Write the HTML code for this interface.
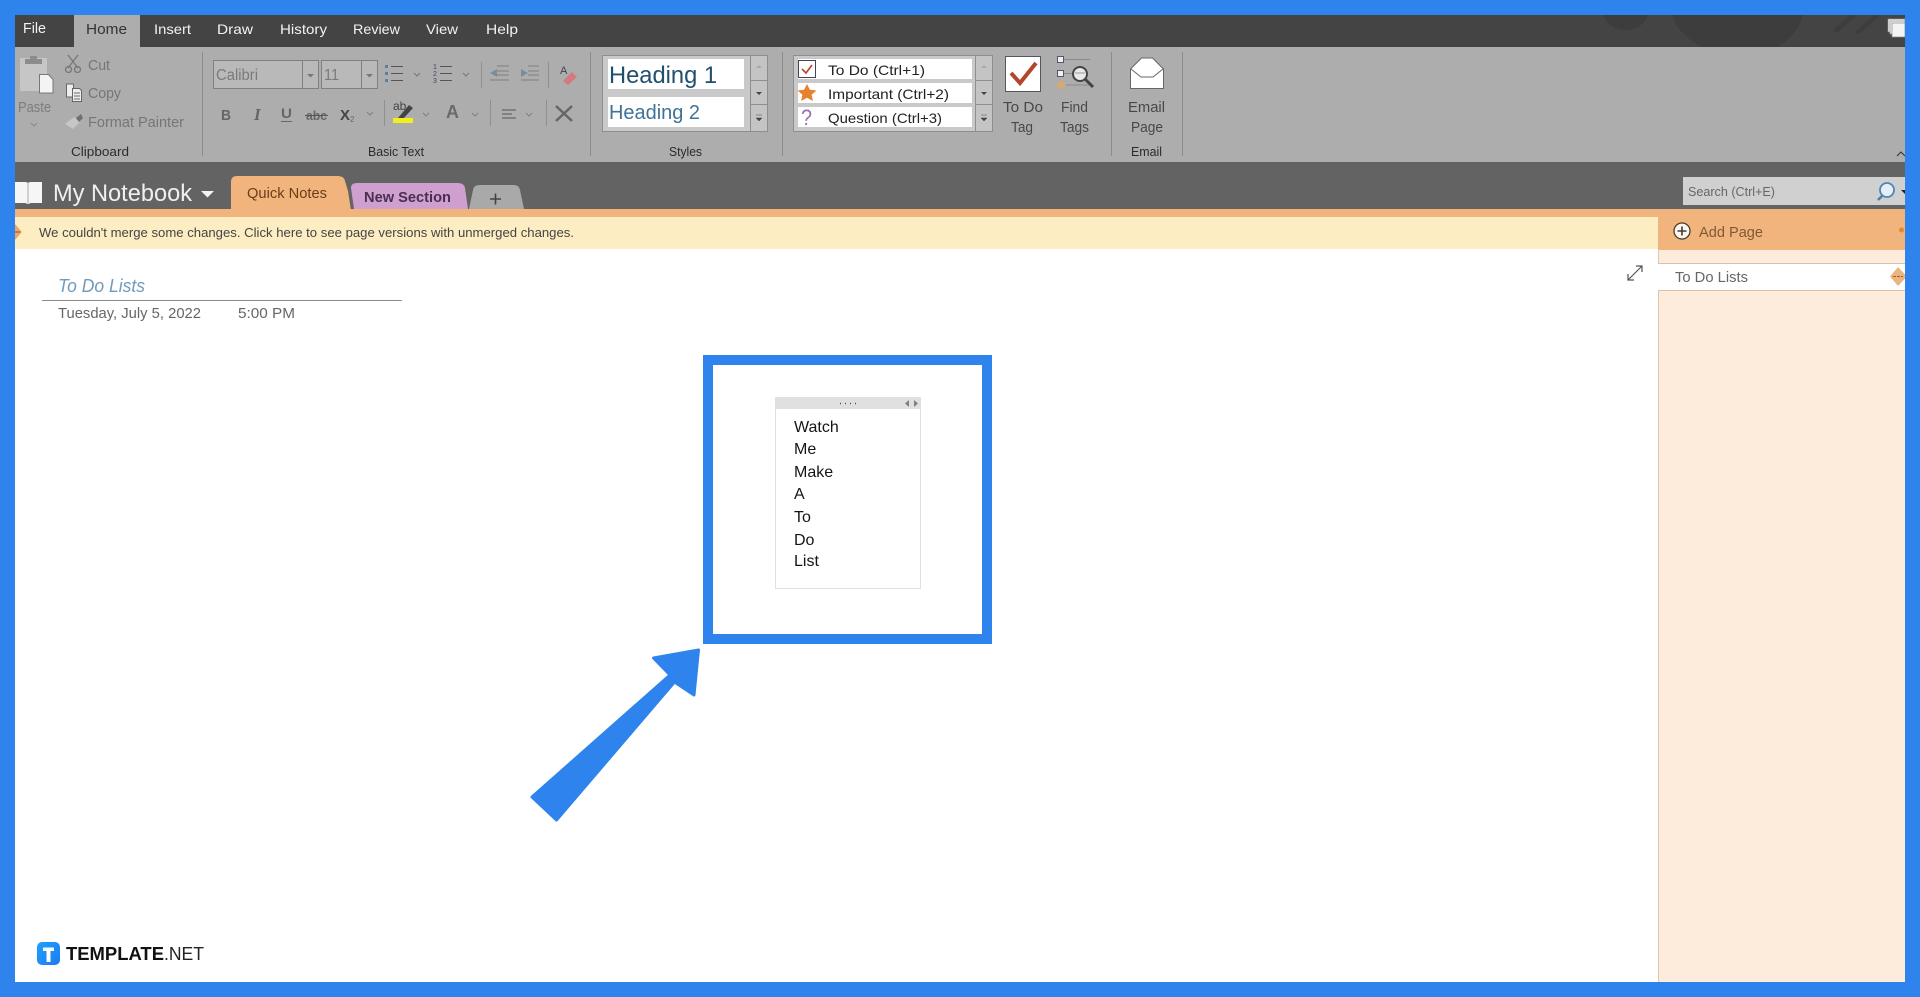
<!DOCTYPE html>
<html><head><meta charset="utf-8"><title>OneNote To Do</title>
<style>
html,body{margin:0;padding:0;background:#2e84ec;width:1920px;height:997px;overflow:hidden}
svg{display:block}
text{font-family:"Liberation Sans",sans-serif;font-size:14px;fill:#3c3c3c}
.m{fill:#f2f2f2}
.g{fill:#767676;font-size:14.500px}
.l{fill:#2a2a2a;font-size:13px}
.d{fill:#484848;font-size:15px}
.t{fill:#222;font-size:14px}
.n{fill:#151515;font-size:16px}
</style></head><body>
<svg width="1920" height="997" viewBox="0 0 1920 997" xmlns="http://www.w3.org/2000/svg">
<defs><clipPath id="c"><rect x="15" y="15" width="1890" height="967"/></clipPath>
<linearGradient id="lg" x1="0" y1="0" x2="1" y2="1"><stop offset="0" stop-color="#1ea0ff"/><stop offset="1" stop-color="#1c7cf0"/></linearGradient></defs>
<rect width="1920" height="997" fill="#2e84ec"/>
<g clip-path="url(#c)">
<rect x="15" y="15" width="1890" height="967" fill="#fff"/>
<!-- title bar -->
<rect x="15" y="15" width="1890" height="32" fill="#444"/>
<g fill="#3d3d3d">
<path d="M1603 15h45c-3 9-11 15-22 15s-20-6-23-15z"/>
<path d="M1672 15h131c-4 14-14 26-26 32h-74c-14-6-27-18-31-32z"/>
<path d="M1833 30l17-15h7l-20 18zM1855 32l19-17h7l-22 19z"/>
</g>
<text class="m" x="23" y="33" textLength="23" lengthAdjust="spacingAndGlyphs" style="font-size:15px">File</text>
<rect x="74" y="15" width="66" height="32" fill="#adadad"/>
<text x="86" y="34" textLength="41" lengthAdjust="spacingAndGlyphs" style="fill:#333;font-size:15px">Home</text>
<text class="m" x="154" y="34" textLength="37" lengthAdjust="spacingAndGlyphs">Insert</text>
<text class="m" x="217" y="34" textLength="36" lengthAdjust="spacingAndGlyphs">Draw</text>
<text class="m" x="280" y="34" textLength="47" lengthAdjust="spacingAndGlyphs">History</text>
<text class="m" x="353" y="34" textLength="47" lengthAdjust="spacingAndGlyphs">Review</text>
<text class="m" x="426" y="34" textLength="32" lengthAdjust="spacingAndGlyphs">View</text>
<text class="m" x="486" y="34" textLength="32" lengthAdjust="spacingAndGlyphs">Help</text>
<g fill="#f4f4f4" stroke="#888" stroke-width=".7"><rect x="1888" y="19" width="17" height="13"/><rect x="1890" y="21" width="15" height="13"/><rect x="1892" y="23" width="13" height="14"/></g>
<!-- ribbon -->
<rect x="15" y="47" width="1890" height="115" fill="#adadad"/>
<g stroke="#8c8c8c" stroke-width="1"><path d="M202.500 52v104M590.500 52v104M782.500 52v104M1111.500 52v104M1182.500 52v104"/></g>
<!-- clipboard -->
<rect x="20" y="58" width="27" height="33" fill="#c6c6c6"/><rect x="25" y="59" width="17" height="5" fill="#8c8c8c"/><rect x="30" y="56" width="7" height="4" fill="#8c8c8c"/>
<path d="M39.500 74.500h9l4.500 5v13.500h-13.500z" fill="#f4f4f4" stroke="#777"/>
<text x="18" y="112" textLength="33" lengthAdjust="spacingAndGlyphs" style="fill:#7c7c7c;font-size:15px">Paste</text>
<path d="M31 123l3 3 3-3" fill="none" stroke="#888"/>
<g fill="none" stroke="#777" stroke-width="1.300"><path d="M68 55l10 13M78 55l-10 13"/><circle cx="68.500" cy="69.500" r="3"/><circle cx="77.500" cy="69.500" r="3"/></g>
<text class="g" x="88" y="70" textLength="22" lengthAdjust="spacingAndGlyphs">Cut</text>
<path d="M66.500 84h7v13h-7z" fill="#eee" stroke="#666"/><path d="M72.500 88.500h7l2 2v11h-9z" fill="#eee" stroke="#666"/><path d="M74 93h6M74 96h6M74 99h6" stroke="#666"/>
<text class="g" x="88" y="98" textLength="33" lengthAdjust="spacingAndGlyphs">Copy</text>
<path d="M65 124l9-7 6 5-7 7z" fill="#c6c6c6"/><path d="M76 118l5-4 2 4-4 4z" fill="#6f6f6f"/>
<text class="g" x="88" y="127" textLength="96" lengthAdjust="spacingAndGlyphs">Format Painter</text>
<text class="l" x="71" y="156" textLength="58" lengthAdjust="spacingAndGlyphs">Clipboard</text>
<!-- font boxes -->
<rect x="213.500" y="60.500" width="105" height="28" fill="#b9b9b9" stroke="#808080"/><path d="M302.500 60v28" stroke="#808080"/>
<path d="M307 74h7l-3.500 3.500z" fill="#777"/>
<text x="216" y="80" textLength="42" lengthAdjust="spacingAndGlyphs" style="fill:#7a7a7a;font-size:15.500px">Calibri</text>
<rect x="321.500" y="60.500" width="56" height="28" fill="#b9b9b9" stroke="#808080"/><path d="M361.500 60v28" stroke="#808080"/>
<path d="M366 74h7l-3.500 3.500z" fill="#777"/>
<text x="324" y="80" textLength="15" lengthAdjust="spacingAndGlyphs" style="fill:#7a7a7a;font-size:15.500px">11</text>
<!-- lists -->
<g stroke="#555" stroke-width="1"><path d="M391 66.500h12M391 73.500h12M391 80.500h12"/><path d="M440 66.500h12M440 73.500h12M440 80.500h12"/></g>
<g fill="#5f7f9f"><rect x="385" y="65" width="3" height="3"/><rect x="385" y="72" width="3" height="3"/><rect x="385" y="79" width="3" height="3"/></g>
<g fill="none" stroke="#777"><path d="M414 73l3 3 3-3M463 73l3 3 3-3"/></g>
<text x="433" y="69" style="font-size:7px;fill:#446">1</text><text x="433" y="76" style="font-size:7px;fill:#446">2</text><text x="433" y="83" style="font-size:7px;fill:#446">3</text>
<path d="M481.500 62v26M548.500 62v26" stroke="#909090"/>
<g stroke="#808080"><path d="M497 66h12M497 71h12M497 75h12M490 80h19"/><path d="M528 66h11M528 71h11M528 75h11M521 80h18"/></g>
<path d="M497 69l-7 4 7 4zM521 69l7 4-7 4z" fill="#7b8d9b"/>
<text x="560" y="74" style="font-size:11px;fill:#444">A</text>
<path d="M563 81l9-9 5 5-9 8z" fill="#d27a7e"/>
<!-- row 2 -->
<text x="221" y="120" style="font-weight:bold;font-size:15px;fill:#666" textLength="10" lengthAdjust="spacingAndGlyphs">B</text>
<text x="254" y="120" style="font-family:'Liberation Serif',serif;font-style:italic;font-weight:bold;font-size:17px;fill:#666">I</text>
<text x="281" y="118" style="font-weight:bold;font-size:14px;fill:#666" textLength="11" lengthAdjust="spacingAndGlyphs">U</text><path d="M281 121.500h11" stroke="#666"/>
<text x="306" y="120" style="font-size:13px;font-weight:bold;fill:#666" textLength="21" lengthAdjust="spacingAndGlyphs">abc</text><path d="M305 115.500h23" stroke="#555"/>
<text x="340" y="120" style="font-size:15px;font-weight:bold;fill:#444" textLength="10" lengthAdjust="spacingAndGlyphs">X</text>
<text x="350" y="122" style="font-size:8px;fill:#667">2</text>
<path d="M367 112l3 3 3-3M423 113l3 3 3-3M472 113l3 3 3-3M526 113l3 3 3-3" fill="none" stroke="#808080"/>
<path d="M384.500 100v26M490.500 100v26M546.500 100v26" stroke="#909090"/>
<text x="393" y="110" style="font-size:12px;fill:#444">ab</text>
<path d="M398 118l11-13 4 3-10 11z" fill="#444"/>
<rect x="393" y="118" width="20" height="5" fill="#f3ee1e"/>
<text x="446" y="118" style="font-size:18px;font-weight:bold;fill:#6a6a6a" textLength="13" lengthAdjust="spacingAndGlyphs">A</text>
<path d="M502 110h14M502 114h10M502 118h14" stroke="#555"/>
<path d="M556 106l16 15M572 106l-16 15" stroke="#666" stroke-width="2.500"/>
<text class="l" x="368" y="156" textLength="56" lengthAdjust="spacingAndGlyphs">Basic Text</text>
<!-- styles -->
<rect x="602.500" y="55.500" width="165" height="76" fill="#c9c9c9" stroke="#8e8e8e"/>
<rect x="608" y="59" width="136" height="30" fill="#fff"/><rect x="608" y="97" width="136" height="30" fill="#fff"/>
<rect x="750.500" y="55.500" width="17" height="76" fill="#c4c4c4" stroke="#8e8e8e"/><path d="M750 80.500h18M750 104.500h18" stroke="#8e8e8e"/>
<path d="M756 68l3-3 3 3z" fill="#aaa"/><path d="M756 92h6l-3 3z" fill="#444"/><path d="M756 115h6M756 118h6l-3 3z" fill="#444" stroke="#444" stroke-width=".5"/>
<text x="609" y="83" textLength="108" lengthAdjust="spacingAndGlyphs" style="font-size:24px;fill:#21506f">Heading 1</text>
<text x="609" y="119" textLength="91" lengthAdjust="spacingAndGlyphs" style="font-size:20px;fill:#3f7299">Heading 2</text>
<text class="l" x="669" y="156" textLength="33" lengthAdjust="spacingAndGlyphs">Styles</text>
<!-- tags -->
<rect x="793.500" y="55.500" width="199" height="76" fill="#c9c9c9" stroke="#8e8e8e"/>
<rect x="798" y="59" width="174" height="20" fill="#fff"/><rect x="798" y="83" width="174" height="20" fill="#fff"/><rect x="798" y="107" width="174" height="20" fill="#fff"/>
<rect x="975.500" y="55.500" width="17" height="76" fill="#c4c4c4" stroke="#8e8e8e"/><path d="M975 80.500h18M975 104.500h18" stroke="#8e8e8e"/>
<path d="M981 68l3-3 3 3z" fill="#aaa"/><path d="M981 92h6l-3 3z" fill="#444"/><path d="M981 115h6M981 118h6l-3 3z" fill="#444" stroke="#444" stroke-width=".5"/>
<rect x="798.500" y="60.500" width="17" height="17" fill="#fff" stroke="#445"/>
<path d="M802 69l4 4 6-8" fill="none" stroke="#b5442c" stroke-width="1.600"/>
<path d="M807 84l2.900 5.800 6.600.7-4.900 4.200 1.300 6.300-5.900-3.200-5.900 3.200 1.300-6.300-4.900-4.200 6.600-.7z" fill="#e8812e"/>
<text x="801" y="125" style="font-size:22px;fill:#9a6fb5;font-weight:normal" textLength="11" lengthAdjust="spacingAndGlyphs">?</text>
<text class="t" x="828" y="75" textLength="97" lengthAdjust="spacingAndGlyphs">To Do (Ctrl+1)</text>
<text class="t" x="828" y="99" textLength="121" lengthAdjust="spacingAndGlyphs">Important (Ctrl+2)</text>
<text class="t" x="828" y="123" textLength="114" lengthAdjust="spacingAndGlyphs">Question (Ctrl+3)</text>
<rect x="1005.500" y="56.500" width="35" height="35" fill="#fff" stroke="#4f5a60"/>
<path d="M1011 73l9 10 16-20" fill="none" stroke="#b5442c" stroke-width="4"/>
<text class="d" x="1003" y="112" textLength="40" lengthAdjust="spacingAndGlyphs">To Do</text>
<text class="d" x="1011" y="132" textLength="22" lengthAdjust="spacingAndGlyphs">Tag</text>
<rect x="1057.500" y="56.500" width="6" height="6" fill="#f0f0f0" stroke="#556"/><rect x="1057.500" y="70.500" width="6" height="6" fill="#f0f0f0" stroke="#556"/>
<path d="M1064 59.500h26M1064 73.500h9M1066 85h24" stroke="#8a8a8a"/>
<path d="M1061 79l1.700 3.800 4 .4-3 2.700.9 4-3.600-2.100-3.600 2.100.9-4-3-2.700 4-.4z" fill="#d7a86f"/>
<circle cx="1080" cy="74" r="7" fill="#e8e8e8" stroke="#444" stroke-width="2"/><path d="M1085 79l8 8" stroke="#444" stroke-width="3"/><path d="M1075 73h10" stroke="#999"/>
<text class="d" x="1061" y="112" textLength="27" lengthAdjust="spacingAndGlyphs">Find</text>
<text class="d" x="1060" y="132" textLength="29" lengthAdjust="spacingAndGlyphs">Tags</text>
<!-- email -->
<path d="M1130.500 69l11-11h11l11 11v19.500h-33z" fill="#fff" stroke="#666"/><path d="M1131 69l10 8h12l10-8" fill="none" stroke="#666"/>
<text class="d" x="1128" y="112" textLength="37" lengthAdjust="spacingAndGlyphs">Email</text>
<text class="d" x="1131" y="132" textLength="32" lengthAdjust="spacingAndGlyphs">Page</text>
<text class="l" x="1131" y="156" textLength="31" lengthAdjust="spacingAndGlyphs">Email</text>
<path d="M1897 156l4-4 4 4" fill="none" stroke="#333"/>
<!-- notebook bar -->
<rect x="15" y="162" width="1890" height="47" fill="#636363"/>
<rect x="15" y="209" width="1890" height="8" fill="#f0b47c"/>
<path d="M15 182h10c2 0 3 1 3 1s1-1 3-1h11v21H31l-3 1-3-1H15z" fill="#f6f6f6"/><path d="M28 183v20" stroke="#aaa"/>
<text x="53" y="201" textLength="139" lengthAdjust="spacingAndGlyphs" style="font-size:24.500px;fill:#f0f0f0">My Notebook</text>
<path d="M201 191h13l-6.500 6.500z" fill="#f2f2f2"/>
<path d="M231 217v-35q0-6 6-6h101q6 0 7 5l3 10 4 26z" fill="#f0b47c"/>
<text x="247" y="198" textLength="80" lengthAdjust="spacingAndGlyphs" style="fill:#6a3d18;font-size:15px">Quick Notes</text>
<path d="M354 209l-3-21q0-5 6-5h101q6 0 7 5l3 21z" fill="#cfa0cf"/>
<text x="364" y="202" textLength="87" lengthAdjust="spacingAndGlyphs" style="font-weight:bold;fill:#4a3050;font-size:15px">New Section</text>
<path d="M469 209l4-19q1-5 6-5h35q5 0 6 5l4 19z" fill="#a9a9a9"/>
<path d="M490 199h11M495.500 193.500v11" stroke="#444" stroke-width="1.600"/>
<!-- message bar -->
<rect x="15" y="217" width="1643" height="32" fill="#fdedc2"/>
<path d="M15 224l7 8-7 8z" fill="#e8a870"/><path d="M15 232h5" stroke="#a04a10"/>
<text x="39" y="237" textLength="535" lengthAdjust="spacingAndGlyphs" style="font-size:13px;fill:#444">We couldn't merge some changes. Click here to see page versions with unmerged changes.</text>
<!-- search -->
<rect x="1683" y="177" width="222" height="28" fill="#d0d0d0"/>
<text x="1688" y="196" textLength="87" lengthAdjust="spacingAndGlyphs" style="font-size:13px;fill:#666">Search (Ctrl+E)</text>
<circle cx="1887" cy="190" r="7" fill="#e6eef6" stroke="#4f86b8" stroke-width="1.800"/><path d="M1882 196l-4 4" stroke="#4f7ba8" stroke-width="2.400"/>
<path d="M1901 190h4v4z" fill="#222"/>
<!-- sidebar -->
<rect x="1658" y="217" width="247" height="765" fill="#fdebdc"/>
<path d="M1658.500 250v732" stroke="#e2c8aa"/>
<rect x="1658" y="209" width="247" height="41" fill="#f0b47c"/>
<circle cx="1682" cy="231" r="8" fill="#fbf6f0" stroke="#4a3a2c" stroke-width="1.300"/><path d="M1677.500 231h9M1682 226.500v9" stroke="#4a3a2c" stroke-width="1.600"/>
<text x="1699" y="237" textLength="64" lengthAdjust="spacingAndGlyphs" style="font-size:15px;fill:#7d5a38">Add Page</text>
<circle cx="1901.500" cy="230" r="2.500" fill="#e08a2c"/>
<rect x="1658" y="263" width="247" height="27" fill="#fff"/>
<path d="M1658 263.500h247M1658 290.500h247" stroke="#d8c2ac"/>
<text x="1675" y="282" textLength="73" lengthAdjust="spacingAndGlyphs" style="font-size:14.500px;fill:#666">To Do Lists</text>
<path d="M1898 267l9 9.500-9 9.500-8-9.500z" fill="#eab580"/><path d="M1893 276.500h10" stroke="#b05a18" stroke-dasharray="3 1"/>
<!-- expand -->
<path d="M1628 280l14-14M1636 266h6v6M1628 274v6h6" fill="none" stroke="#555" stroke-width="1.200"/>
<!-- page title -->
<text x="58" y="292" textLength="87" lengthAdjust="spacingAndGlyphs" style="font-style:italic;font-size:18px;fill:#6f9bbd">To Do Lists</text>
<path d="M42 300.500h360" stroke="#8a8a8a"/>
<text x="58" y="318" textLength="143" lengthAdjust="spacingAndGlyphs" style="font-size:15px;fill:#666">Tuesday, July 5, 2022</text>
<text x="238" y="318" textLength="57" lengthAdjust="spacingAndGlyphs" style="font-size:15px;fill:#666">5:00 PM</text>
<!-- highlight square -->
<rect x="708" y="360" width="279" height="279" fill="none" stroke="#2e84ec" stroke-width="10"/>
<!-- note container -->
<rect x="775.500" y="397.500" width="145" height="191" fill="#fff" stroke="#e0e0e0"/>
<rect x="775" y="397" width="146" height="12" fill="#e0e0e0"/>
<path d="M840 403.500h1M845 403.500h1M850 403.500h1M855 403.500h1" stroke="#555" stroke-width="1.500"/>
<path d="M909 400v7l-4-3.500zM914 400v7l4-3.500z" fill="#808080"/>
<text class="n" x="794" y="432">Watch</text>
<text class="n" x="794" y="454">Me</text>
<text class="n" x="794" y="477">Make</text>
<text class="n" x="794" y="499">A</text>
<text class="n" x="794" y="522">To</text>
<text class="n" x="794" y="545">Do</text>
<text class="n" x="794" y="566">List</text>
<!-- arrow -->
<path d="M698.500 650L653.500 658 670 675 532 797 556.500 820 674.500 682 694 695z" fill="#2e84ec" stroke="#2e84ec" stroke-width="3" stroke-linejoin="round"/>
<!-- logo -->
<rect x="37" y="942" width="23" height="23" rx="5" fill="url(#lg)"/>
<path d="M43 947.500h11v3.500h-3.500v11h-4v-11h-3.500z" fill="#fff"/>
<text x="66" y="960" textLength="98" lengthAdjust="spacingAndGlyphs" style="font-size:18px;font-weight:bold;fill:#111">TEMPLATE</text>
<text x="164" y="960" textLength="40" lengthAdjust="spacingAndGlyphs" style="font-size:18px;fill:#222">.NET</text>
</g>
</svg>
</body></html>
